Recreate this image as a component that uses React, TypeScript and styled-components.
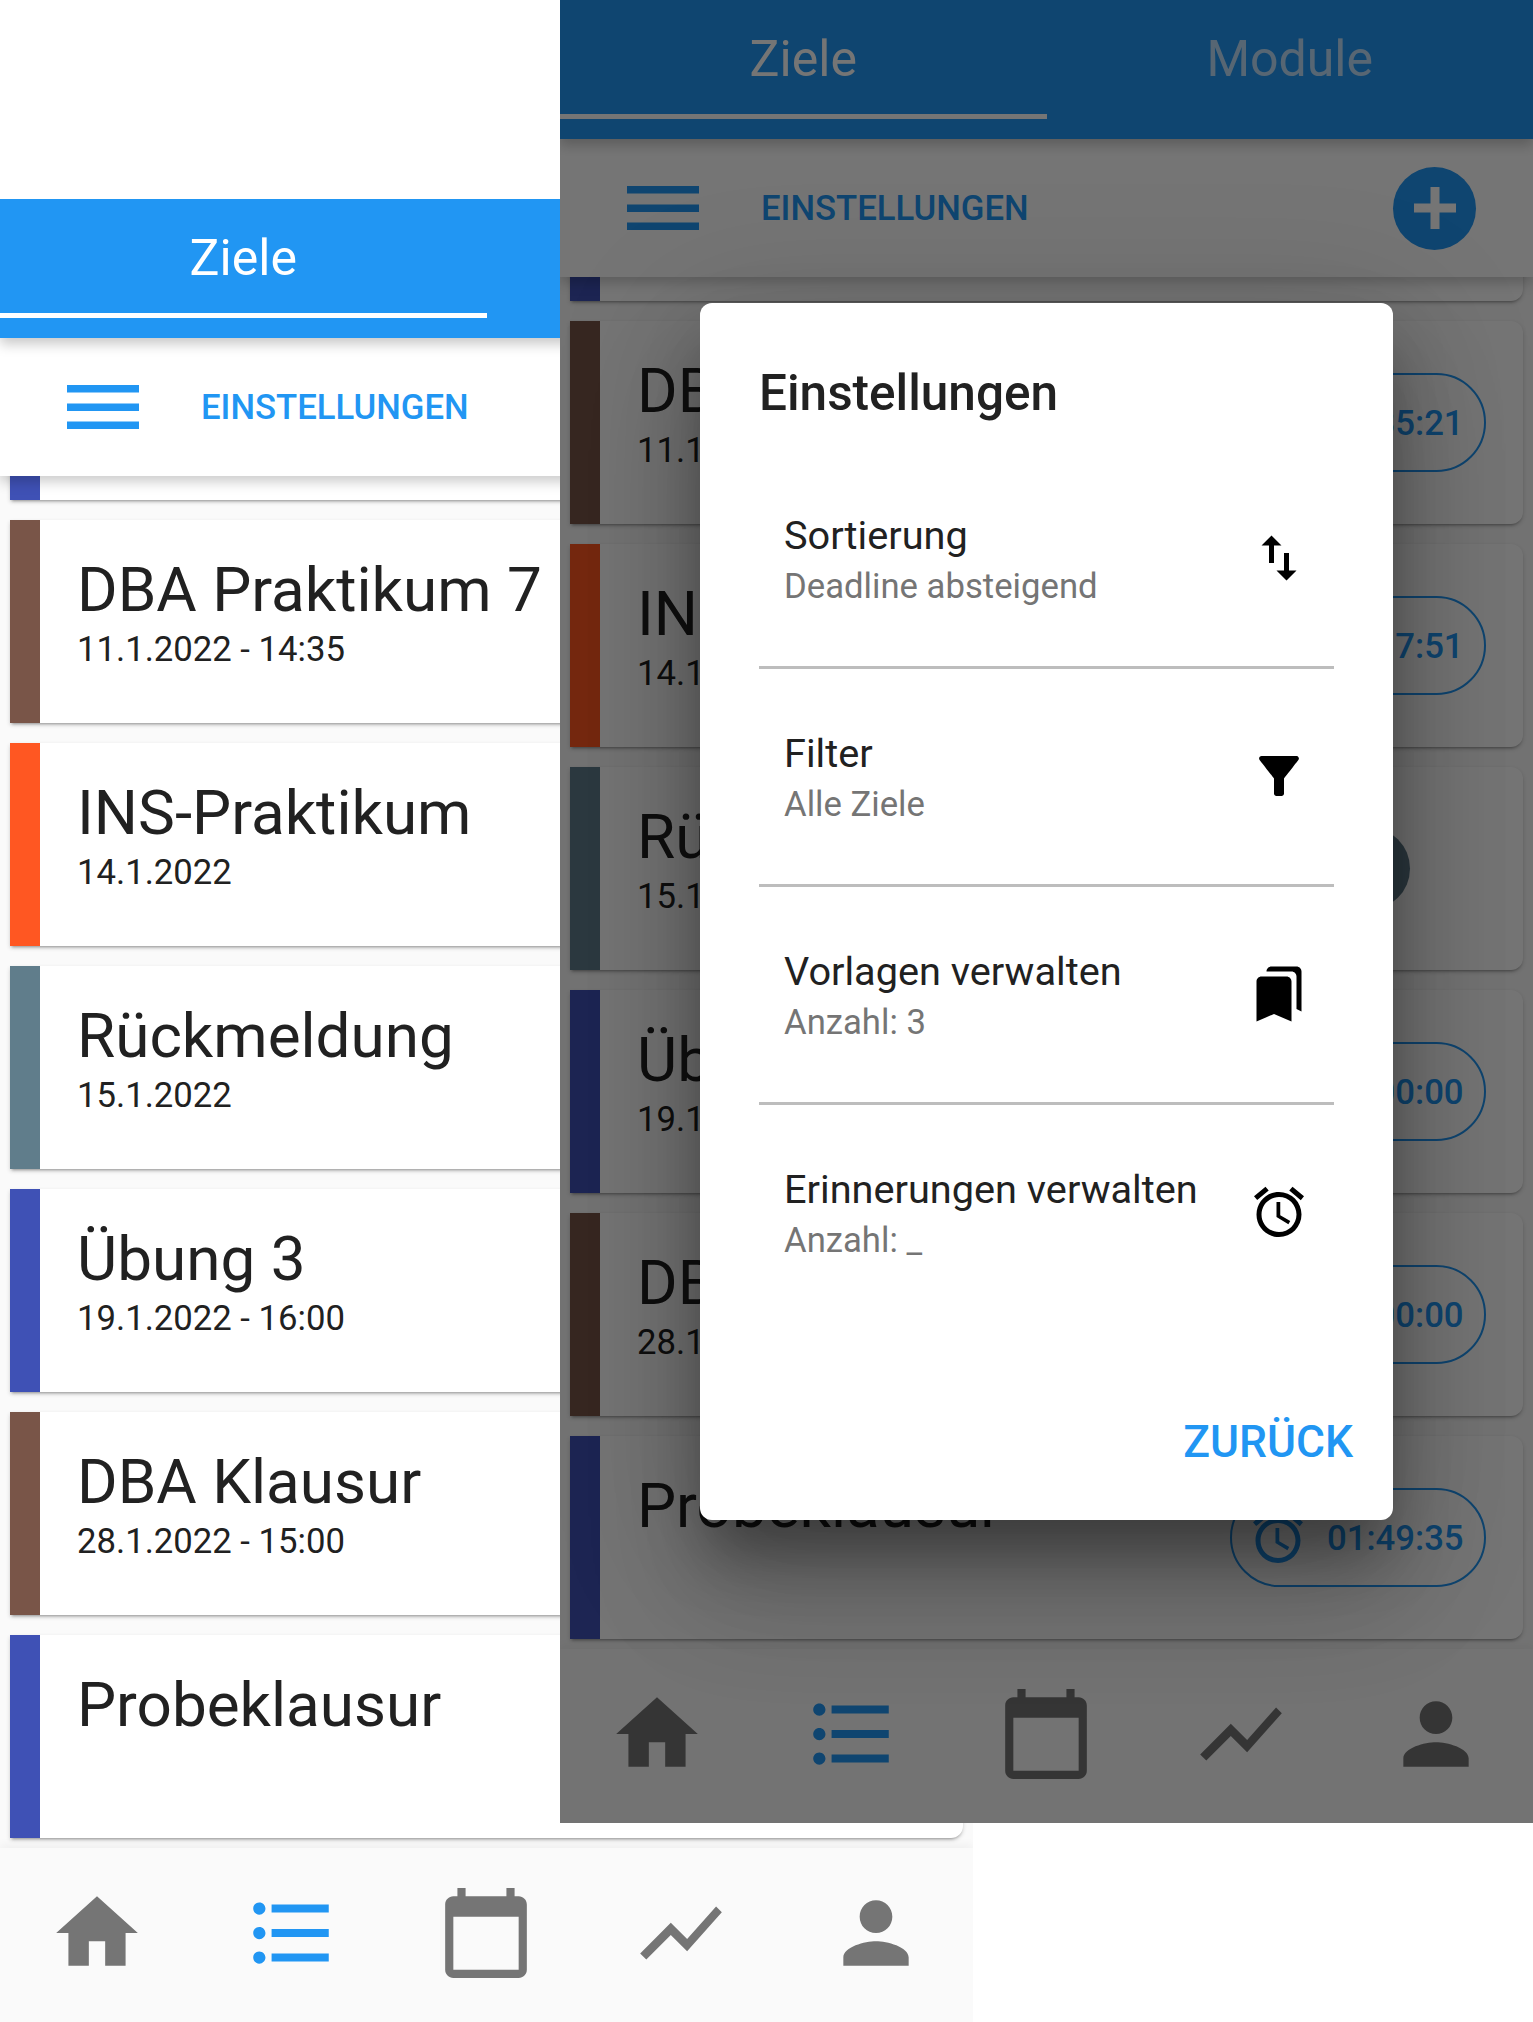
import * as React from "react";
import styled, { createGlobalStyle } from "styled-components";
import {
  MdAccessAlarm,
  MdBookmarks,
  MdCalendarToday,
  MdFilterAlt,
  MdFormatListBulleted,
  MdHome,
  MdPerson,
  MdShowChart,
  MdSwapVert,
} from "react-icons/md";

const BLUE = "#2196f3";

const GlobalStyle = createGlobalStyle`
  html, body {
    margin: 0;
    padding: 0;
    background: #fff;
    font-family: Roboto, "Noto Sans", sans-serif;
  }
`;

const Page = styled.div`
  position: relative;
  width: 1533px;
  height: 2022px;
  overflow: hidden;
  padding-top: 199px;
  box-sizing: border-box;
`;

const ScreenFrame = styled.div`
  position: relative;
  isolation: isolate;
  display: flex;
  flex-direction: column;
  width: 973px;
  height: 1823px;
  overflow: hidden;
  background: #fafafa;
`;

// second phone screenshot pasted over the first one
const TopScreen = styled.div`
  position: absolute;
  z-index: 10;
  left: 560px;
  top: 0;
`;

const AppBar = styled.div`
  position: relative;
  z-index: 3;
  display: flex;
  flex: none;
  height: 139px;
  background: ${BLUE};
  box-shadow: 0 6px 12px rgba(0, 0, 0, 0.22);
`;

const Tab = styled.div<{ $active?: boolean }>`
  flex: 1;
  height: 119px;
  box-sizing: border-box;
  display: flex;
  align-items: center;
  justify-content: center;
  padding-top: 3px;
  font-size: 50px;
  color: #fff;
  opacity: ${(p) => (p.$active ? 1 : 0.7)};
  border-bottom: 5px solid ${(p) => (p.$active ? "#fff" : "transparent")};
`;

const Toolbar = styled.div`
  position: relative;
  z-index: 2;
  display: flex;
  flex: none;
  align-items: center;
  height: 138px;
  padding: 0 57px 0 67px;
  background: #fff;
  box-shadow: 0 6px 12px rgba(0, 0, 0, 0.2);
`;

const ToolbarLabel = styled.div`
  margin-left: 62px;
  font-size: 34.7px;
  font-weight: 500;
  color: ${BLUE};
`;

const Fab = styled.div`
  display: flex;
  align-items: center;
  justify-content: center;
  width: 83px;
  height: 83px;
  margin-left: auto;
  border-radius: 50%;
  background: ${BLUE};
  color: #fff;
`;

const ListArea = styled.div`
  flex: 1;
  min-height: 0;
  overflow: hidden;
`;

const CardList = styled.div`
  display: flex;
  flex-direction: column;
  gap: 20px;
  margin-top: -179px;
  padding: 0 10px;
`;

const Card = styled.div`
  display: flex;
  align-items: stretch;
  flex: none;
  height: 203px;
  background: #fff;
  border-radius: 0 12px 12px 0;
  box-shadow: 0 3px 3px -2px rgba(0, 0, 0, 0.3), 0 2px 4px rgba(0, 0, 0, 0.16);
`;

const Stripe = styled.div<{ $color: string }>`
  flex: none;
  width: 30px;
  background: ${(p) => p.$color};
`;

const CardText = styled.div`
  padding: 30px 0 0 37px;
`;

const CardTitle = styled.div`
  font-size: 62px;
  line-height: 79px;
  color: #212121;
  white-space: nowrap;
`;

const CardDate = styled.div`
  font-size: 34.7px;
  line-height: 40px;
  color: #212121;
`;

const Chip = styled.div`
  display: flex;
  align-items: center;
  gap: 19px;
  align-self: center;
  box-sizing: border-box;
  width: 256px;
  height: 99px;
  margin-left: auto;
  margin-right: 37px;
  padding-left: 16px;
  border: 2.5px solid ${BLUE};
  border-radius: 50px;
  color: ${BLUE};
  font-size: 34.7px;
  font-weight: 500;
`;

const RoundAction = styled.div<{ $color: string }>`
  align-self: center;
  width: 83px;
  height: 83px;
  margin-left: auto;
  margin-right: 113px;
  border-radius: 50%;
  background: ${(p) => p.$color};
`;

const BottomNav = styled.div`
  position: relative;
  z-index: 1;
  display: grid;
  flex: none;
  grid-template-columns: repeat(5, 1fr);
  box-sizing: border-box;
  height: 174px;
  padding-bottom: 5px;
  background: #fafafa;
  box-shadow: 0 -4px 8px rgba(0, 0, 0, 0.04);
`;

const NavItem = styled.div<{ $active?: boolean }>`
  display: flex;
  align-items: center;
  justify-content: center;
  color: ${(p) => (p.$active ? BLUE : "#757575")};
`;

const Scrim = styled.div`
  position: absolute;
  inset: 0;
  z-index: 5;
  display: flex;
  align-items: center;
  justify-content: center;
  background: rgba(0, 0, 0, 0.54);
`;

const Dialog = styled.div`
  display: flex;
  flex-direction: column;
  box-sizing: border-box;
  width: 693px;
  height: 1217px;
  padding: 0 59px;
  border-radius: 12px;
  background: #fff;
  box-shadow: 0 40px 60px -10px rgba(0, 0, 0, 0.36),
    0 72px 114px 9px rgba(0, 0, 0, 0.14), 0 27px 138px 24px rgba(0, 0, 0, 0.12);
`;

const DialogTitle = styled.div`
  display: flex;
  flex: none;
  align-items: center;
  height: 145px;
  padding-top: 34px;
  box-sizing: border-box;
  font-size: 49.5px;
  font-weight: 500;
  color: #212121;
`;

const SettingRow = styled.div`
  display: flex;
  flex: none;
  align-items: center;
  justify-content: space-between;
  box-sizing: border-box;
  height: 218px;
  padding: 0 25px;
  color: #000;
  border-top: 3px solid transparent;
  & + & {
    border-top-color: #bdbdbd;
  }
  & > svg {
    margin-top: -2px;
  }
`;

const RowText = styled.div`
  padding-top: 4px;
`;

const RowTitle = styled.div`
  font-size: 39.7px;
  line-height: 50px;
  color: #212121;
`;

const RowSub = styled.div`
  font-size: 34.7px;
  line-height: 50px;
  color: #757575;
`;

const DialogActions = styled.div`
  display: flex;
  justify-content: flex-end;
  margin-top: auto;
  margin-right: -19px;
  padding-bottom: 52px;
`;

const BackButton = styled.div`
  font-size: 44.4px;
  font-weight: 500;
  line-height: 52px;
  color: ${BLUE};
`;

type Goal = {
  title?: string;
  date?: string;
  color: string;
  timer?: string;
  round?: boolean;
};

const goals: Goal[] = [
  { color: "#3f51b5" },
  { title: "DBA Praktikum 7", date: "11.1.2022 - 14:35", color: "#795548", timer: "00:35:21" },
  { title: "INS-Praktikum", date: "14.1.2022", color: "#ff5722", timer: "00:17:51" },
  { title: "Rückmeldung", date: "15.1.2022", color: "#607d8b", round: true },
  { title: "Übung 3", date: "19.1.2022 - 16:00", color: "#3f51b5", timer: "00:00:00" },
  { title: "DBA Klausur", date: "28.1.2022 - 15:00", color: "#795548", timer: "00:00:00" },
  { title: "Probeklausur", color: "#3f51b5", timer: "01:49:35" },
];

const settings = [
  { title: "Sortierung", sub: "Deadline absteigend", icon: <MdSwapVert size={60} /> },
  { title: "Filter", sub: "Alle Ziele", icon: <MdFilterAlt size={60} /> },
  { title: "Vorlagen verwalten", sub: "Anzahl: 3", icon: <MdBookmarks size={60} /> },
  { title: "Erinnerungen verwalten", sub: "Anzahl: _", icon: <MdAccessAlarm size={60} /> },
];

const MenuIcon = () => (
  <svg width="72" height="44" viewBox="0 0 72 44" fill="currentColor" style={{ color: BLUE, flex: "none" }}>
    <rect y="0" width="72" height="7.5" />
    <rect y="18.5" width="72" height="7.5" />
    <rect y="36.5" width="72" height="7.5" />
  </svg>
);

const PlusIcon = () => (
  <svg width="42" height="42" viewBox="0 0 42 42" fill="currentColor">
    <rect x="16.5" width="9" height="42" />
    <rect y="16.5" width="42" height="9" />
  </svg>
);

const GoalCard: React.FC<{ goal: Goal }> = ({ goal }) => (
  <Card>
    <Stripe $color={goal.color} />
    <CardText>
      {goal.title && <CardTitle>{goal.title}</CardTitle>}
      {goal.date && <CardDate>{goal.date}</CardDate>}
    </CardText>
    {goal.timer && (
      <Chip>
        <MdAccessAlarm size={60} />
        {goal.timer}
      </Chip>
    )}
    {goal.round && <RoundAction $color={goal.color} />}
  </Card>
);

const Screen: React.FC<{ children?: React.ReactNode }> = ({ children }) => (
  <ScreenFrame>
    <AppBar>
      <Tab $active>Ziele</Tab>
      <Tab>Module</Tab>
    </AppBar>
    <Toolbar>
      <MenuIcon />
      <ToolbarLabel>EINSTELLUNGEN</ToolbarLabel>
      <Fab>
        <PlusIcon />
      </Fab>
    </Toolbar>
    <ListArea>
      <CardList>
        {goals.map((goal, i) => (
          <GoalCard key={i} goal={goal} />
        ))}
      </CardList>
    </ListArea>
    <BottomNav>
      <NavItem><MdHome size={98} /></NavItem>
      <NavItem $active><MdFormatListBulleted size={98} /></NavItem>
      <NavItem><MdCalendarToday size={98} /></NavItem>
      <NavItem><MdShowChart size={98} /></NavItem>
      <NavItem><MdPerson size={98} /></NavItem>
    </BottomNav>
    {children}
  </ScreenFrame>
);

const App: React.FC = () => {
  return (
    <Page>
      <GlobalStyle />
      <Screen />
      <TopScreen>
        <Screen>
          <Scrim>
            <Dialog>
              <DialogTitle>Einstellungen</DialogTitle>
              {settings.map((s) => (
                <SettingRow key={s.title}>
                  <RowText>
                    <RowTitle>{s.title}</RowTitle>
                    <RowSub>{s.sub}</RowSub>
                  </RowText>
                  {s.icon}
                </SettingRow>
              ))}
              <DialogActions>
                <BackButton>ZURÜCK</BackButton>
              </DialogActions>
            </Dialog>
          </Scrim>
        </Screen>
      </TopScreen>
    </Page>
  );
};

export default App;
